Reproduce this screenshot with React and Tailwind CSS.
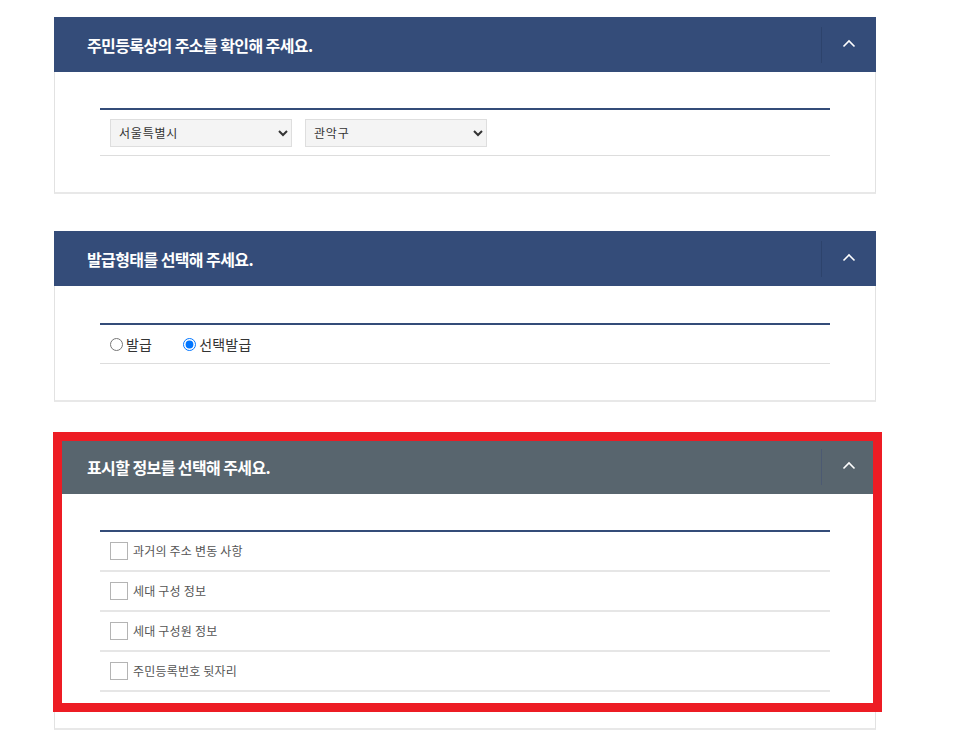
import React from "react";

const font = { fontFamily: '"Noto Sans CJK KR", "Noto Sans", sans-serif' };

function Chevron() {
  return (
    <svg width="14" height="9" viewBox="0 0 14 9" fill="none">
      <path d="M1.5 7.5 L7 2 L12.5 7.5" stroke="#ffffff" strokeWidth="1.6" />
    </svg>
  );
}

function Header({ title, gray }) {
  return (
    <div
      className={`flex h-[55px] items-center ${gray ? "bg-[#58656e]" : "bg-[#344c79]"}`}
    >
      <div className="flex-1 pl-[33px] text-[16px] font-bold tracking-[-0.6px] text-white">
        {title}
      </div>
      <div
        className={`h-[36px] w-px ${gray ? "bg-[#4c5a72]" : "bg-[#2d436c]"}`}
      />
      <div className="flex w-[54px] items-center justify-center pb-[2px]">
        <Chevron />
      </div>
    </div>
  );
}

function Body({ children, pt = "pt-[36px]" }) {
  return (
    <div className={`border-x border-b-2 border-x-[#e2e2e2] border-b-[#e8e8e8] px-[45px] ${pt} pb-[36px]`}>
      <div className="h-[2px] bg-[#344c79]" />
      {children}
    </div>
  );
}

function Select({ value }) {
  return (
    <select
      defaultValue={value}
      className="h-[28px] w-[182px] border border-[#dedede] bg-[#f4f4f4] pl-[4px] text-[12px] tracking-[0.8px] text-[#333]"
      style={font}
    >
      <option>{value}</option>
    </select>
  );
}

function CheckRow({ label }) {
  return (
    <div className="flex h-[40px] items-center border-b-2 border-[#e6e6e6] pl-[10px]">
      <span className="h-[18px] w-[18px] border border-[#b4b4b4] bg-white" />
      <span className="ml-[5px] text-[12px] tracking-[0.2px] text-[#555]">{label}</span>
    </div>
  );
}

export default function App() {
  return (
    <div className="min-h-[734px] bg-white pt-[17px]" style={font}>
      <div className="ml-[54px] flex w-[822px] flex-col gap-[37px]">
        <section>
          <Header title="주민등록상의 주소를 확인해 주세요." />
          <Body>
            <div className="flex h-[46px] items-center gap-[13px] border-b border-[#dddddd] pl-[10px]">
              <Select value="서울특별시" />
              <Select value="관악구" />
            </div>
          </Body>
        </section>

        <section>
          <Header title="발급형태를 선택해 주세요." />
          <Body pt="pt-[37px]">
            <div className="flex h-[39px] items-center border-b border-[#dddddd] pl-[10px] text-[14px] tracking-[0.2px] text-[#333]">
              <label className="flex items-center">
                <input type="radio" name="t" className="m-0 h-[13px] w-[13px]" />
                <span className="ml-[3px]">발급</span>
              </label>
              <label className="ml-[31px] flex items-center">
                <input type="radio" name="t" defaultChecked className="m-0 h-[13px] w-[13px]" />
                <span className="ml-[3px]">선택발급</span>
              </label>
            </div>
          </Body>
        </section>

        <section className="relative">
          <Header title="표시할 정보를 선택해 주세요." gray />
          <Body>
            <CheckRow label="과거의 주소 변동 사항" />
            <CheckRow label="세대 구성 정보" />
            <CheckRow label="세대 구성원 정보" />
            <CheckRow label="주민등록번호 뒷자리" />
          </Body>
          <div className="pointer-events-none absolute left-[-1px] top-[-7px] h-[280px] w-[829px] border-[9px] border-[#ed1c24]" />
        </section>
      </div>
    </div>
  );
}
